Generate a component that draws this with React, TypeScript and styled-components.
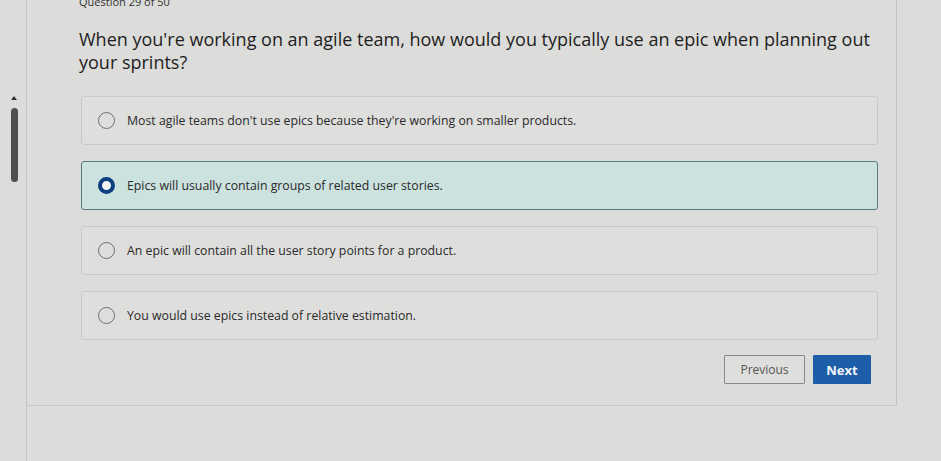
import React, { useState } from "react";
import styled, { createGlobalStyle } from "styled-components";

const GlobalStyle = createGlobalStyle`
  html, body {
    margin: 0;
    padding: 0;
    background: #dcdcda;
    font-family: "Open Sans", "Liberation Sans", sans-serif;
    color: #222;
  }
`;

const options = [
  "Most agile teams don't use epics because they're working on smaller products.",
  "Epics will usually contain groups of related user stories.",
  "An epic will contain all the user story points for a product.",
  "You would use epics instead of relative estimation.",
];

export default function App() {
  const [selected, setSelected] = useState(1);

  return (
    <>
      <GlobalStyle />
      <Page>
        <Sidebar>
          <ScrollArrow />
          <ScrollThumb />
        </Sidebar>
        <Panel>
          <Counter>Question 29 of 50</Counter>
          <Title>
            When you're working on an agile team, how would you typically use an epic when planning out
            your sprints?
          </Title>
          <OptionList>
            {options.map((text, i) => (
              <Option key={i} $selected={selected === i} onClick={() => setSelected(i)}>
                <Radio $selected={selected === i} />
                <OptionText>{text}</OptionText>
              </Option>
            ))}
          </OptionList>
          <Footer>
            <PrevButton>Previous</PrevButton>
            <NextButton>Next</NextButton>
          </Footer>
        </Panel>
      </Page>
    </>
  );
}

const Page = styled.div`
  display: flex;
  width: 941px;
  height: 461px;
  overflow: hidden;
`;

const Sidebar = styled.div`
  width: 27px;
  flex-shrink: 0;
  border-right: 1px solid #c6c6c4;
  display: flex;
  flex-direction: column;
  align-items: center;
  padding-top: 96px;
  box-sizing: border-box;
  padding-left: 2px;
`;

const ScrollArrow = styled.div`
  width: 0;
  height: 0;
  border-left: 3px solid transparent;
  border-right: 3px solid transparent;
  border-bottom: 4px solid #333;
  margin-bottom: 8px;
`;

const ScrollThumb = styled.div`
  width: 7px;
  height: 74px;
  border-radius: 4px;
  background: #4e4e4e;
`;

const Panel = styled.div`
  width: 870px;
  height: 406px;
  box-sizing: border-box;
  border-right: 1px solid #c2c2c0;
  border-bottom: 1px solid #c6c6c4;
  padding: 0 20px 0 52px;
  display: flex;
  flex-direction: column;
`;

const Counter = styled.div`
  font-size: 11px;
  line-height: 11px;
  margin-top: -4px;
  color: #333;
`;

const Title = styled.h1`
  margin: 21px 0 0;
  font-size: 18px;
  font-weight: 400;
  line-height: 23px;
  color: #1e1e1e;
  width: 800px;
`;

const OptionList = styled.div`
  display: flex;
  flex-direction: column;
  gap: 16px;
  margin-top: 22px;
  width: 797px;
  margin-left: 2px;
`;

const Option = styled.div<{ $selected: boolean }>`
  height: 49px;
  box-sizing: border-box;
  display: flex;
  align-items: center;
  padding-left: 16px;
  border-radius: 3px;
  border: 1px solid ${(p) => (p.$selected ? "#587880" : "#c9c9c7")};
  background: ${(p) => (p.$selected ? "#cce2df" : "#dededc")};
  cursor: pointer;
`;

const Radio = styled.span<{ $selected: boolean }>`
  width: ${(p) => (p.$selected ? "9px" : "15px")};
  height: ${(p) => (p.$selected ? "9px" : "15px")};
  border-radius: 50%;
  border: ${(p) => (p.$selected ? "4px solid #0d3f80" : "1px solid #6f6f6f")};
  background: ${(p) => (p.$selected ? "#f4f4f4" : "transparent")};
  flex-shrink: 0;
  margin-right: 12px;
`;

const OptionText = styled.span`
  font-size: 12.3px;
  color: #2a2a2a;
`;

const Footer = styled.div`
  display: flex;
  justify-content: flex-end;
  gap: 8px;
  margin-top: 15px;
  width: 792px;
`;

const PrevButton = styled.button`
  width: 81px;
  height: 29px;
  border: 1px solid #8a8a8a;
  background: #dededc;
  color: #555;
  font-family: "Open Sans", "Liberation Sans", sans-serif;
  font-size: 12px;
  border-radius: 1px;
`;

const NextButton = styled.button`
  width: 58px;
  height: 29px;
  border: none;
  background: #1c5ea8;
  color: #f2f6fa;
  font-family: "Open Sans", "Liberation Sans", sans-serif;
  font-weight: 700;
  font-size: 13px;
  border-radius: 1px;
`;
